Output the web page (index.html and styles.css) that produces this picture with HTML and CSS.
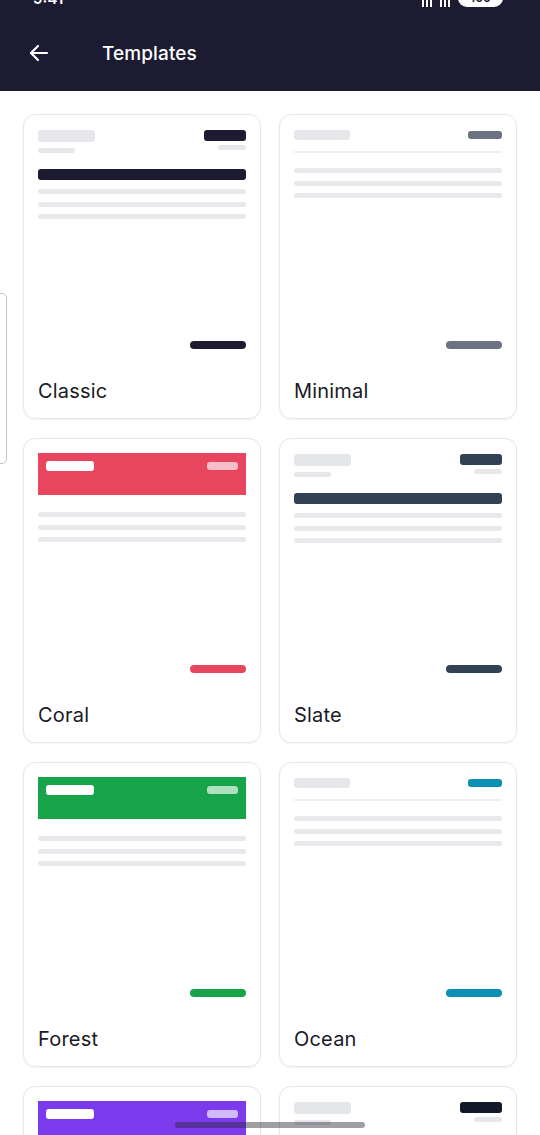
FILE: index.html
```html
<!DOCTYPE html>
<html lang="en">
<head>
    <meta charset="UTF-8">
    <meta name="viewport" content="width=device-width, initial-scale=1.0">
    <title>Templates</title>
    <link rel="stylesheet" href="styles.css">
</head>
<body>
    <header class="appbar">
        <div class="status">
            <span class="clock">9:41</span>
            <span class="status-icons">
                <span class="sig"><i></i><i></i><i></i></span>
                <span class="sig"><i></i><i></i><i></i></span>
                <span class="battery">100</span>
            </span>
        </div>
        <div class="toolbar">
            <svg class="back" width="24" height="24" viewBox="0 0 24 24" fill="none" stroke="#fff" stroke-width="2.2" stroke-linecap="round" stroke-linejoin="round">
                <path d="M20 12H4"/>
                <path d="M11 5l-7 7 7 7"/>
            </svg>
            <h1 class="title">Templates</h1>
        </div>
    </header>

    <div class="side-tab"></div>

    <main class="grid">
        <!-- Classic -->
        <div class="card">
            <div class="preview">
                <div class="head-row">
                    <div class="stack">
                        <div class="sk sk-title"></div>
                        <div class="sk sk-sub"></div>
                    </div>
                    <div class="stack right">
                        <div class="tag" style="background:#1c1b31"></div>
                        <div class="sk sk-tiny"></div>
                    </div>
                </div>
                <div class="bar" style="background:#1c1b31"></div>
                <div class="lines">
                    <div class="sk line"></div>
                    <div class="sk line"></div>
                    <div class="sk line"></div>
                </div>
                <div class="foot" style="background:#1c1b31"></div>
            </div>
            <div class="label">Classic</div>
        </div>

        <!-- Minimal -->
        <div class="card">
            <div class="preview">
                <div class="min-row">
                    <div class="sk sk-min"></div>
                    <div class="tag small" style="background:#6b7280"></div>
                </div>
                <div class="divider"></div>
                <div class="lines tight">
                    <div class="sk line"></div>
                    <div class="sk line"></div>
                    <div class="sk line"></div>
                </div>
                <div class="foot" style="background:#6b7280"></div>
            </div>
            <div class="label">Minimal</div>
        </div>

        <!-- Coral -->
        <div class="card">
            <div class="preview">
                <div class="band" style="background:#e8455f">
                    <div class="band-title"></div>
                    <div class="band-tag"></div>
                </div>
                <div class="lines band-lines">
                    <div class="sk line"></div>
                    <div class="sk line"></div>
                    <div class="sk line"></div>
                </div>
                <div class="foot" style="background:#e8455f"></div>
            </div>
            <div class="label">Coral</div>
        </div>

        <!-- Slate -->
        <div class="card">
            <div class="preview">
                <div class="head-row">
                    <div class="stack">
                        <div class="sk sk-title"></div>
                        <div class="sk sk-sub"></div>
                    </div>
                    <div class="stack right">
                        <div class="tag" style="background:#334155"></div>
                        <div class="sk sk-tiny"></div>
                    </div>
                </div>
                <div class="bar" style="background:#334155"></div>
                <div class="lines">
                    <div class="sk line"></div>
                    <div class="sk line"></div>
                    <div class="sk line"></div>
                </div>
                <div class="foot" style="background:#334155"></div>
            </div>
            <div class="label">Slate</div>
        </div>

        <!-- Forest -->
        <div class="card">
            <div class="preview">
                <div class="band" style="background:#16a34a">
                    <div class="band-title"></div>
                    <div class="band-tag"></div>
                </div>
                <div class="lines band-lines">
                    <div class="sk line"></div>
                    <div class="sk line"></div>
                    <div class="sk line"></div>
                </div>
                <div class="foot" style="background:#16a34a"></div>
            </div>
            <div class="label">Forest</div>
        </div>

        <!-- Ocean -->
        <div class="card">
            <div class="preview">
                <div class="min-row">
                    <div class="sk sk-min"></div>
                    <div class="tag small" style="background:#0891b2"></div>
                </div>
                <div class="divider"></div>
                <div class="lines tight">
                    <div class="sk line"></div>
                    <div class="sk line"></div>
                    <div class="sk line"></div>
                </div>
                <div class="foot" style="background:#0891b2"></div>
            </div>
            <div class="label">Ocean</div>
        </div>

        <!-- Violet -->
        <div class="card">
            <div class="preview">
                <div class="band" style="background:#7c3aed">
                    <div class="band-title"></div>
                    <div class="band-tag"></div>
                </div>
                <div class="lines band-lines">
                    <div class="sk line"></div>
                    <div class="sk line"></div>
                    <div class="sk line"></div>
                </div>
                <div class="foot" style="background:#7c3aed"></div>
            </div>
            <div class="label">Violet</div>
        </div>

        <!-- Mono -->
        <div class="card">
            <div class="preview">
                <div class="head-row">
                    <div class="stack">
                        <div class="sk sk-title"></div>
                        <div class="sk sk-sub"></div>
                    </div>
                    <div class="stack right">
                        <div class="tag" style="background:#111827"></div>
                        <div class="sk sk-tiny"></div>
                    </div>
                </div>
                <div class="bar" style="background:#111827"></div>
                <div class="lines">
                    <div class="sk line"></div>
                    <div class="sk line"></div>
                    <div class="sk line"></div>
                </div>
                <div class="foot" style="background:#111827"></div>
            </div>
            <div class="label">Mono</div>
        </div>
    </main>

    <div class="home-bar"></div>
</body>
</html>
```

FILE: styles.css
```css
body {
    margin: 0;
    padding: 0;
    background: #fff;
    font-family: Inter, "Noto Sans", sans-serif;
    color: #1a1a24;
    overflow: hidden;
}

.appbar {
    background: #1c1b31;
    height: 91px;
    color: #fff;
    overflow: hidden;
}

.status {
    display: flex;
    justify-content: space-between;
    align-items: center;
    height: 18px;
    margin-top: -11px;
    padding: 0 37px 0 33px;
    font-size: 15px;
    font-weight: 600;
}

.status-icons {
    display: flex;
    align-items: flex-end;
    gap: 8px;
}

.sig {
    display: flex;
    align-items: flex-end;
    gap: 2px;
    height: 14px;
}

.sig i {
    display: block;
    width: 2px;
    height: 14px;
    background: #fff;
}

.battery {
    background: #fff;
    color: #1c1b31;
    border-radius: 9px;
    padding: 0 12px;
    font-size: 12px;
    line-height: 18px;
}

.toolbar {
    display: flex;
    align-items: center;
    height: 56px;
    margin-top: 18px;
    padding-left: 27px;
}

.back {
    display: block;
}

.title {
    margin: 0 0 0 51px;
    font-size: 19px;
    font-weight: 500;
    letter-spacing: 0.1px;
}

.grid {
    display: grid;
    grid-template-columns: 1fr 1fr;
    column-gap: 18px;
    row-gap: 19px;
    padding: 23px 23px 40px;
}

.card {
    height: 305px;
    box-sizing: border-box;
    border: 1px solid #e6e6ea;
    border-radius: 12px;
    box-shadow: 0 1px 2px rgba(0, 0, 0, 0.05);
    padding: 14px 14px 0;
    display: flex;
    flex-direction: column;
}

.preview {
    height: 220px;
    display: flex;
    flex-direction: column;
}

.sk {
    background: #e5e7eb;
    border-radius: 3px;
}

.head-row {
    display: flex;
    justify-content: space-between;
    margin-top: 1px;
}

.stack {
    display: flex;
    flex-direction: column;
}

.stack.right {
    align-items: flex-end;
}

.sk-title {
    width: 57px;
    height: 12px;
}

.sk-sub {
    width: 37px;
    height: 5px;
    margin-top: 6px;
}

.tag {
    width: 42px;
    height: 11px;
    border-radius: 3px;
}

.tag.small {
    width: 34px;
    height: 8px;
    margin-top: 1px;
}

.sk-tiny {
    width: 28px;
    height: 5px;
    margin-top: 4px;
}

.bar {
    height: 11px;
    border-radius: 3px;
    margin-top: 16px;
}

.lines {
    display: flex;
    flex-direction: column;
    gap: 7.5px;
    margin-top: 9px;
}

.line {
    height: 5px;
    background: #e8e9ec;
}

.min-row {
    display: flex;
    justify-content: space-between;
    align-items: flex-start;
    margin-top: 1px;
}

.sk-min {
    width: 56px;
    height: 10px;
}

.divider {
    height: 2px;
    background: #eeeff1;
    margin-top: 11px;
}

.lines.tight {
    margin-top: 15px;
}

.band {
    height: 42px;
    display: flex;
    justify-content: space-between;
    align-items: flex-start;
    padding: 8px 8px 0;
    box-sizing: border-box;
}

.band-title {
    width: 48px;
    height: 10px;
    background: #fff;
    border-radius: 3px;
}

.band-tag {
    width: 31px;
    height: 8px;
    margin-top: 1px;
    background: rgba(255, 255, 255, 0.65);
    border-radius: 3px;
}

.lines.band-lines {
    margin-top: 17px;
}

.foot {
    width: 56px;
    height: 8px;
    border-radius: 4px;
    margin-top: auto;
    align-self: flex-end;
}

.label {
    margin-top: 30px;
    font-size: 20px;
    line-height: 24px;
    letter-spacing: 0.2px;
}

.side-tab {
    position: absolute;
    left: -10px;
    top: 293px;
    width: 15px;
    height: 169px;
    border: 1px solid #c4c4c8;
    border-radius: 5px;
    background: #fff;
}

.home-bar {
    position: fixed;
    left: 175px;
    bottom: 7px;
    width: 190px;
    height: 6px;
    border-radius: 3px;
    background: rgba(40, 40, 50, 0.45);
}
```
